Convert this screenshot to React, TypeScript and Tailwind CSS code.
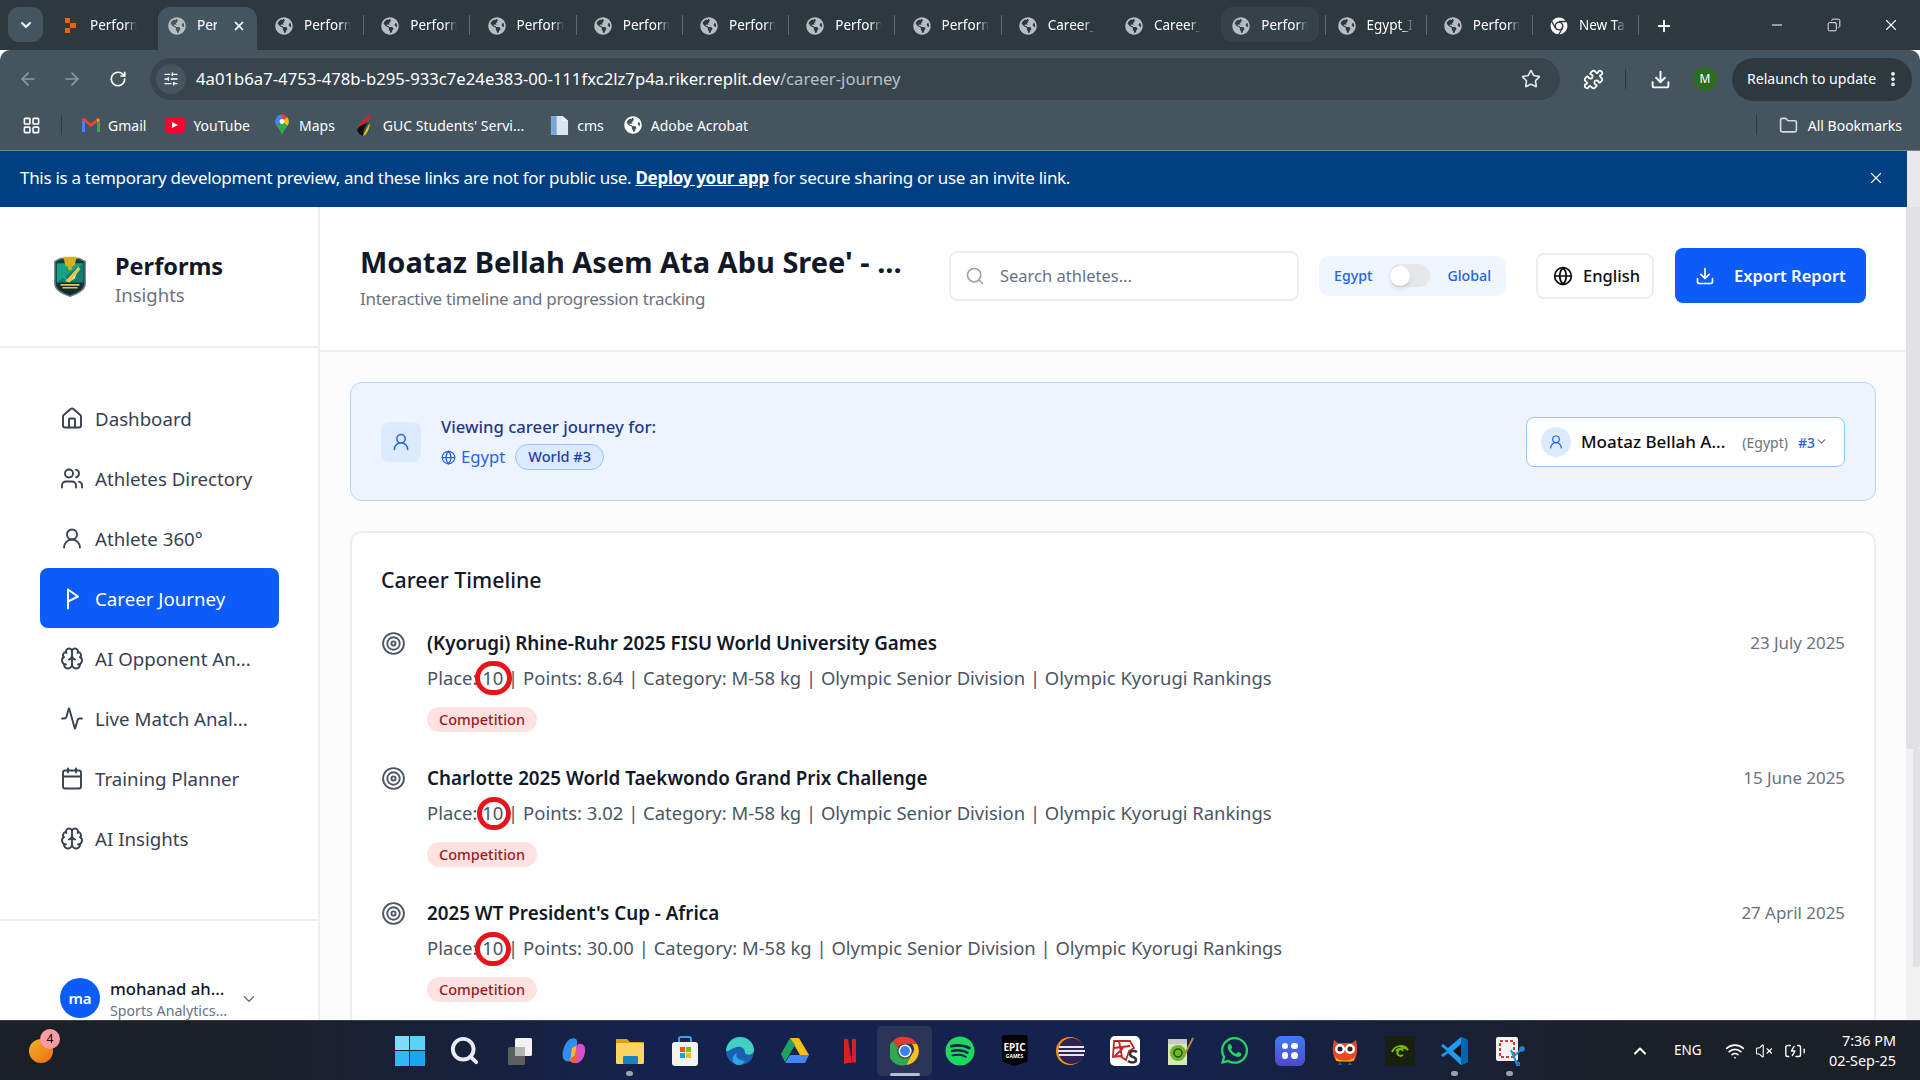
import React from "react";
import {
  Home, Users, UserRound, Brain, Activity, Calendar, Globe, Search, Download, ChevronDown, ChevronUp,
  Target, X, Star, RotateCw, ArrowLeft, ArrowRight, Puzzle, EllipsisVertical, Plus, Minus, Copy, Folder,
  LayoutGrid, VolumeX, Wifi, BatteryCharging, SlidersHorizontal,
} from "lucide-react";
import { FaGlobeAmericas, FaWhatsapp, FaSpotify } from "react-icons/fa";

const FONT = "font-['Noto_Sans','Open_Sans',sans-serif]";

function ReplitIcon() {
  return (
    <svg viewBox="0 0 18 18" className="w-[18px] h-[18px] shrink-0">
      <path d="M4 1h5v5H4zM9 6h6v5H9zM4 11h5v5H4z" fill="#f26207" />
    </svg>
  );
}

function ChromeIcon({ size = 20 }: { size?: number }) {
  return (
    <svg viewBox="0 0 32 32" width={size} height={size} className="shrink-0">
      <circle cx="16" cy="16" r="15" fill="#fff" />
      <path d="M16 8h14M10 20 3 8M22 20l-7 12" stroke="#2d383f" strokeWidth="2.500" />
      <circle cx="16" cy="16" r="8" fill="#2d383f" />
      <circle cx="16" cy="16" r="5.500" fill="#fff" />
    </svg>
  );
}

const R = "w-[106.25px]";
const tabs = [
  { label: "Perform", w: "w-[106px]", sep: false, kind: "replit" },
  { label: "Per", w: "w-[99px]", sep: false, kind: "active" },
  { label: "Perform", w: R, sep: true, kind: "globe" },
  { label: "Perform", w: R, sep: true, kind: "globe" },
  { label: "Perform", w: R, sep: true, kind: "globe" },
  { label: "Perform", w: R, sep: true, kind: "globe" },
  { label: "Perform", w: R, sep: true, kind: "globe" },
  { label: "Perform", w: R, sep: true, kind: "globe" },
  { label: "Perform", w: R, sep: true, kind: "globe" },
  { label: "Career_", w: R, sep: false, kind: "globe" },
  { label: "Career_", w: R, sep: false, kind: "globe" },
  { label: "Perform", w: R, sep: true, kind: "hover" },
  { label: "Egypt_I", w: R, sep: true, kind: "globe" },
  { label: "Perform", w: R, sep: true, kind: "globe" },
  { label: "New Ta", w: R, sep: true, kind: "chrome" },
];

function TabBar() {
  return (
    <div className="h-[50px] bg-[#2d383f] flex items-start pl-[8px] text-white">
      <div className="w-[35px] h-[35px] mt-[7px] rounded-[11px] bg-[#45555f] flex items-center justify-center mr-[9px] shrink-0">
        <ChevronDown size={16} strokeWidth={3} />
      </div>
      {tabs.map((t, i) => {
        const active = t.kind === "active";
        return (
          <div
            key={i}
            className={`${t.w} ${active ? "h-[43px] mt-[7px] bg-[#45555f] rounded-t-[12px] mr-[9px]" : "h-[35px] mt-[7px]"} flex items-center shrink-0`}
          >
            <div className={`flex items-center h-[35px] pt-[2px] ${t.kind === "hover" ? "bg-[#35424a] rounded-[11px] w-[98px] ml-[-1px] pl-[11px]" : active ? "pl-[10px] w-full mb-[8px]" : "pl-[9px] w-[100px]"}`}>
              {t.kind === "replit" ? <ReplitIcon /> : t.kind === "chrome" ? <ChromeIcon size={18} /> : <FaGlobeAmericas size={18} className="text-[#b6bcc0] shrink-0" />}
              <span className={`ml-[11px] text-[13.5px] overflow-hidden whitespace-nowrap ${active ? "w-[20px]" : "w-[47px] [mask-image:linear-gradient(to_right,black_75%,transparent)]"}`}>
                {t.label}
              </span>
              {active && <X size={14} strokeWidth={3} className="ml-[15px]" />}
            </div>
            {t.sep && <div className={`w-[1px] h-[20px] bg-[#5a6a74] ${t.kind === "hover" ? "ml-[6px]" : "ml-[-3px]"}`} />}
          </div>
        );
      })}
      <Plus size={18} strokeWidth={2.5} className="mt-[17px] ml-[8px] shrink-0" />
      <div className="ml-auto flex items-center h-[40px] mt-[5px] pr-[1px]">
        <div className="w-[57px] flex justify-center"><Minus size={16} strokeWidth={1.5} /></div>
        <div className="w-[57px] flex justify-center"><Copy size={14} strokeWidth={1.5} className="scale-x-[-1]" /></div>
        <div className="w-[57px] flex justify-center"><X size={18} strokeWidth={1.5} /></div>
      </div>
    </div>
  );
}

function Toolbar() {
  return (
    <div className="h-[58px] bg-[#45555f] rounded-t-[10px] flex items-center text-white">
      <div className="w-[50px] flex justify-center pl-[6px]"><ArrowLeft size={20} className="text-[#8f9ba3]" /></div>
      <div className="w-[44px] flex justify-center"><ArrowRight size={20} className="text-[#8f9ba3]" /></div>
      <div className="w-[54px] flex justify-center pr-[6px]"><RotateCw size={18} strokeWidth={2.2} /></div>
      <div className="ml-[2px] w-[1410px] h-[42px] rounded-full bg-[#38454d] flex items-center">
        <div className="ml-[6px] w-[30px] h-[30px] rounded-full bg-[#45555f] flex items-center justify-center">
          <SlidersHorizontal size={16} />
        </div>
        <span className="ml-[10px] text-[16.7px] whitespace-nowrap">
          4a01b6a7-4753-478b-b295-933c7e24e383-00-111fxc2lz7p4a.riker.replit.dev<span className="text-[#b9c1c6]">/career-journey</span>
        </span>
        <Star size={20} className="ml-auto mr-[19px] text-[#dfe3e5]" />
      </div>
      <div className="ml-[21px] w-[24px] flex justify-center"><Puzzle size={21} /></div>
      <div className="ml-[20px] w-[1px] h-[20px] bg-[#2d383f]" />
      <div className="ml-[22px] w-[24px] flex justify-center"><Download size={21} strokeWidth={2.2} /></div>
      <div className="ml-[21px] w-[24px] h-[24px] rounded-full bg-[#2f6b1e] flex items-center justify-center text-[12px]">M</div>
      <div className="ml-[15px] w-[180px] h-[43px] rounded-full bg-[#2d383f] flex items-center pl-[15px]">
        <span className="text-[14.1px] whitespace-nowrap">Relaunch to update</span>
        <EllipsisVertical size={18} strokeWidth={3} className="ml-auto mr-[10px]" />
      </div>
    </div>
  );
}

function GmailIcon() {
  return (
    <svg viewBox="0 0 20 16" className="w-[20px] h-[16px] shrink-0">
      <path d="M1 15V3l3 2v10z" fill="#4285f4" />
      <path d="M19 15V3l-3 2v10z" fill="#34a853" />
      <path d="M1 3c0-2 2-2.500 3-1.500l6 5 6-5c1-1 3-.5 3 1.500l-9 7z" fill="#ea4335" />
      <path d="M16 1.500 19 3l-3 2z" fill="#fbbc04" />
    </svg>
  );
}
function YoutubeIcon() {
  return (
    <div className="w-[20px] h-[16px] rounded-[4px] bg-[#ff0033] flex items-center justify-center shrink-0">
      <div className="w-0 h-0 border-y-[3.5px] border-y-transparent border-l-[6px] border-l-white" />
    </div>
  );
}
function MapsIcon() {
  return (
    <svg viewBox="0 0 16 24" className="w-[14px] h-[22px] shrink-0">
      <path d="M8 0a8 8 0 0 0-6 13l6-6z" fill="#4285f4" />
      <path d="M8 0a8 8 0 0 1 6 3L8 8z" fill="#ea4335" />
      <path d="M14 3a8 8 0 0 1 0 10L8 8z" fill="#fbbc04" />
      <path d="M2 13c2 3 5 6 6 11 1-5 4-8 6-11L8 7z" fill="#34a853" />
      <circle cx="8" cy="8" r="2.800" fill="#fff" />
    </svg>
  );
}
function GucIcon() {
  return (
    <svg viewBox="0 0 20 24" className="w-[20px] h-[24px] shrink-0">
      <path d="M17 1C10 4 4 10 2 17c3-4 7-7 12-10z" fill="#d4202a" />
      <path d="M2 17c1 3 3 5 6 6 0-5 2-10 5-13-5 1-9 3-11 7z" fill="#111" />
      <path d="M8 23c3-1 6-5 7-13-2 3-5 8-7 13z" fill="#f4c20d" />
    </svg>
  );
}
function CmsIcon() {
  return (
    <svg viewBox="0 0 20 22" className="w-[19px] h-[21px] shrink-0">
      <path d="M1 1h12l6 5v15H1z" fill="#dbe6f2" />
      <path d="M1 1h6v20H1z" fill="#7aa5d6" />
      <path d="M13 1v5h6z" fill="#fff" />
    </svg>
  );
}

function BookmarkBar() {
  return (
    <div className="h-[42px] bg-[#45555f] border-b border-b-[#7c8489] box-content flex items-center pb-0 text-white text-[14px]">
      <div className="w-[61px] flex items-center pl-[22px] mb-[8px]"><LayoutGrid size={19} strokeWidth={2} /></div>
      <div className="flex items-center mb-[8px] flex-1">
        <div className="w-[1px] h-[20px] bg-[#2d383f]" />
        <div className="flex items-center ml-[19px]"><GmailIcon /><span className="ml-[7px]">Gmail</span></div>
        <div className="flex items-center ml-[19px]"><YoutubeIcon /><span className="ml-[8px]">YouTube</span></div>
        <div className="flex items-center ml-[25px]"><MapsIcon /><span className="ml-[10px]">Maps</span></div>
        <div className="flex items-center ml-[20px]"><GucIcon /><span className="ml-[8px] whitespace-nowrap">GUC Students' Servi...</span></div>
        <div className="flex items-center ml-[26px]"><CmsIcon /><span className="ml-[8px]">cms</span></div>
        <div className="flex items-center ml-[20px]"><FaGlobeAmericas size={18} className="text-white" /><span className="ml-[9px]">Adobe Acrobat</span></div>
        <div className="ml-auto flex items-center pr-[18px]">
          <div className="w-[1px] h-[20px] bg-[#2d383f] mr-[22px]" />
          <Folder size={19} className="text-[#d6dadc]" />
          <span className="ml-[10px]">All Bookmarks</span>
        </div>
      </div>
    </div>
  );
}

function Banner() {
  return (
    <div className="h-[56px] flex shrink-0">
      <div className="w-[1907px] bg-[#004082] flex items-center pl-[20px] pb-[2px] text-white text-[17px] tracking-[-0.3px]">
        <span className="whitespace-nowrap">
          This is a temporary development preview, and these links are not for public use.{" "}
          <span className="font-bold underline">Deploy your app</span> for secure sharing or use an invite link.
        </span>
        <X size={18} strokeWidth={1.5} className="ml-auto mr-[22px]" />
      </div>
      <div className="flex-1 bg-[#e8e8ea]" />
    </div>
  );
}

function LogoShield() {
  return (
    <svg viewBox="0 0 36 44" className="w-[34px] h-[43px] shrink-0">
      <path d="M2 6 8 3h20l6 3v24c0 7-10 11-16 13C12 41 2 37 2 30z" fill="#123a3f" stroke="#6f7d80" strokeWidth="1.500" />
      <path d="M4 8h28v20H4z" fill="#19a184" />
      <path d="M4 28 32 8v20z" fill="#0f7f73" />
      <path d="M11 1h14l-2 9-3 2v3h-4v-3l-3-2z" fill="#d9ad22" />
      <path d="M9 19l6 7L28 11l-5 13-7 4z" fill="#eef3f3" />
      <path d="M13 27 27 12l2 2-11 14z" fill="#e8c845" />
      <path d="M6 29h24v6l-12 6-12-6z" fill="#0d2b31" />
      <path d="M8 30h20v1.800H8zM10 33h16v1.800H10z" fill="#e8c845" />
    </svg>
  );
}

function FlagIcon() {
  return (
    <svg viewBox="0 0 24 24" className="w-[25px] h-[25px]" fill="none" stroke="currentColor" strokeWidth="2" strokeLinecap="round" strokeLinejoin="round">
      <path d="M8 22V3l10 7-10 5" />
    </svg>
  );
}

const navItems = [
  { label: "Dashboard", icon: <Home size={25} strokeWidth={1.9} /> },
  { label: "Athletes Directory", icon: <Users size={25} strokeWidth={1.9} /> },
  { label: "Athlete 360°", icon: <UserRound size={25} strokeWidth={1.9} /> },
  { label: "Career Journey", icon: <FlagIcon />, active: true },
  { label: "AI Opponent An...", icon: <Brain size={25} strokeWidth={1.9} /> },
  { label: "Live Match Anal...", icon: <Activity size={25} strokeWidth={1.9} /> },
  { label: "Training Planner", icon: <Calendar size={25} strokeWidth={1.9} /> },
  { label: "AI Insights", icon: <Brain size={25} strokeWidth={1.9} /> },
];

function Sidebar() {
  return (
    <aside className="w-[320px] shrink-0 border-r-2 border-r-[#eeeeef] bg-white flex flex-col overflow-hidden">
      <div className="h-[141px] shrink-0 border-b-2 border-b-[#eeeeef] flex items-center pl-[53px]">
        <LogoShield />
        <div className="ml-[28px] mt-[4px]">
          <div className="text-[23.5px] font-bold text-[#111827] leading-[32px]">Performs</div>
          <div className="text-[18.5px] text-[#6b7280] leading-[26px]">Insights</div>
        </div>
      </div>
      <nav className="pt-[40px] px-[40px] w-[319px] h-[571px] shrink-0 box-border">
        {navItems.map((n) => (
          <div
            key={n.label}
            className={`h-[60px] flex items-center rounded-[8px] pl-[20px] ${n.active ? "bg-[#0b5cf9] text-white" : "text-[#374151]"}`}
          >
            <span className="w-[24px] flex justify-center pt-[1px]">{n.icon}</span>
            <span className="ml-[11px] pt-[3px] text-[18.7px] whitespace-nowrap">{n.label}</span>
          </div>
        ))}
      </nav>
      <div className="border-t-2 border-t-[#eeeeef] pt-[57px] pl-[60px] flex items-start">
        <div className="w-[40px] h-[40px] rounded-full bg-[#0b5cf9] flex items-center justify-center text-white text-[15px] font-semibold">ma</div>
        <div className="ml-[10px] w-[130px]">
          <div className="text-[16.7px] font-medium text-[#111827] leading-[22px]">mohanad ah...</div>
          <div className="text-[14.2px] text-[#6b7280] leading-[22px]">Sports Analytics...</div>
        </div>
        <ChevronDown size={18} className="text-[#6b7280] mt-[12px]" />
      </div>
    </aside>
  );
}

function Header() {
  return (
    <header className="h-[145px] shrink-0 bg-white border-b-2 border-b-[#eeeeef] flex items-center pl-[40px] pb-[6px]">
      <div className="w-[589px] shrink-0 mt-[2px]">
        <h1 className="text-[29px] font-bold text-[#111827] leading-[38px] whitespace-nowrap">Moataz Bellah Asem Ata Abu Sree' - ...</h1>
        <p className="text-[17px] tracking-[-0.3px] text-[#6b7280] leading-[24px] mt-[6px]">Interactive timeline and progression tracking</p>
      </div>
      <div className="w-[350px] h-[50px] shrink-0 rounded-[8px] border-2 border-[#eceded] flex items-center pl-[14px]">
        <Search size={20} className="text-[#9ca3af]" />
        <span className="ml-[15px] pt-[2px] text-[16.5px] text-[#6b7280]">Search athletes...</span>
      </div>
      <div className="ml-[20px] w-[187px] h-[40px] shrink-0 rounded-[10px] bg-[#eff6ff] flex items-center pl-[15px] text-[14.2px] font-medium text-[#2563eb]">
        <span>Egypt</span>
        <div className="ml-[17px] w-[41px] h-[23px] rounded-full bg-[#e5e7eb] flex items-center pl-[1px]">
          <div className="w-[20px] h-[20px] rounded-full bg-white shadow-md" />
        </div>
        <span className="ml-[17px]">Global</span>
      </div>
      <div className="ml-[30px] w-[118px] h-[46px] shrink-0 rounded-[8px] border-2 border-[#eceded] flex items-center pl-[15px] text-[#0b0b0b]">
        <Globe size={20} />
        <span className="ml-[10px] pt-[2px] text-[16.5px] font-medium">English</span>
      </div>
      <div className="ml-[21px] w-[191px] h-[55px] shrink-0 rounded-[8px] bg-[#0b5cf9] flex items-center pl-[20px] text-white">
        <Download size={20} />
        <span className="ml-[19px] pt-[2px] text-[16.5px] font-semibold whitespace-nowrap">Export Report</span>
      </div>
    </header>
  );
}

function AthleteCard() {
  return (
    <section className="h-[119px] rounded-[12px] border border-[#b5d5fd] bg-[#eef4fe] flex items-center pl-[30px] pr-[30px]">
      <div className="w-[40px] h-[40px] rounded-[8px] bg-[#dbeafe] flex items-center justify-center text-[#2563eb]">
        <UserRound size={20} strokeWidth={1.8} />
      </div>
      <div className="ml-[20px] mt-[2px]">
        <div className="text-[16.7px] font-medium text-[#1e3a8a] leading-[24px]">Viewing career journey for:</div>
        <div className="flex items-center mt-[5px]">
          <Globe size={15} className="text-[#2563eb]" />
          <span className="ml-[5px] text-[16.7px] text-[#2563eb]">Egypt</span>
          <span className="ml-[10px] h-[26px] px-[12px] rounded-full border border-[#93c5fd] bg-[#dbeafe] text-[#1e40af] text-[14.5px] font-medium flex items-center">World #3</span>
        </div>
      </div>
      <div className="ml-auto w-[319px] h-[50px] rounded-[8px] border border-[#93c5fd] bg-white flex items-center pl-[14px]">
        <div className="w-[30px] h-[30px] rounded-full bg-[#dbeafe] flex items-center justify-center text-[#2563eb]">
          <UserRound size={16} strokeWidth={1.8} />
        </div>
        <span className="ml-[10px] pt-[1px] text-[17px] font-medium text-[#0b0b0b] whitespace-nowrap">Moataz Bellah A...</span>
        <span className="ml-[17px] pt-[1px] text-[14px] text-[#6b7280]">(Egypt)</span>
        <span className="ml-[10px] pt-[1px] text-[14px] font-medium text-[#2563eb]">#3</span>
        <ChevronDown size={13} className="text-[#6b7280]" />
      </div>
    </section>
  );
}

const events = [
  {
    title: "(Kyorugi) Rhine-Ruhr 2025 FISU World University Games",
    points: "8.64",
    date: "23 July 2025",
    circle: "left-[94px] top-[31px] w-[37px] h-[34px]",
  },
  {
    title: "Charlotte 2025 World Taekwondo Grand Prix Challenge",
    points: "3.02",
    date: "15 June 2025",
    circle: "left-[96px] top-[32px] w-[34px] h-[33px]",
  },
  {
    title: "2025 WT President's Cup - Africa",
    points: "30.00",
    date: "27 April 2025",
    circle: "left-[94px] top-[32px] w-[36px] h-[34px]",
  },
];

function Timeline() {
  return (
    <section className="mt-[30px] rounded-t-[12px] border-2 border-[#eeeeef] bg-white px-[29px] pt-[27px] h-[520px]">
      <h2 className="text-[21.3px] font-medium text-[#111827] leading-[40px] mb-[30px]">Career Timeline</h2>
      <div className="flex flex-col gap-[33px]">
        {events.map((e) => (
          <div key={e.title} className="relative flex items-start h-[102px]">
            <Target size={25} strokeWidth={1.8} className="text-[#4b5563] shrink-0 mt-[1px]" />
            <div className="ml-[21px] flex-1">
              <div className="flex justify-between items-start">
                <div className="text-[18.8px] font-semibold text-[#111827] leading-[26px]">{e.title}</div>
                <div className="text-[16.9px] text-[#6b7280] leading-[26px]">{e.date}</div>
              </div>
              <div className="text-[18.45px] text-[#4b5563] leading-[27px] mt-[8px] whitespace-nowrap">
                Place: 10 | Points: {e.points} | Category: M-58 kg | Olympic Senior Division | Olympic Kyorugi Rankings
              </div>
              <div className="mt-[16px] inline-flex items-center h-[25px] px-[12px] rounded-full bg-[#fee2e2] text-[#991b1b] text-[14.5px] font-medium">Competition</div>
            </div>
            <div className={`absolute ${e.circle} rounded-full border-[5px] border-[#e8141c]`} />
          </div>
        ))}
      </div>
    </section>
  );
}

function Scrollbar() {
  return (
    <div className="w-[14px] shrink-0 bg-[#f1f1f2] flex flex-col">
      <div className="h-[542px] bg-[#e2e2e4] rounded-b-[4px]" />
      <div className="h-[218px] w-[7px] self-end bg-[#e2e2e4] rounded-b-[4px]" />
    </div>
  );
}

function Win() {
  return (
    <div className="grid grid-cols-2 gap-[1px] w-[30px] h-[30px]">
      <div className="bg-[#7fdcfb]" /><div className="bg-[#5cd0fa]" /><div className="bg-[#31b9f6]" /><div className="bg-[#1aa5ef]" />
    </div>
  );
}
const s = "w-[30px] h-[30px]";
function TaskView() {
  return (
    <svg viewBox="0 0 30 30" className={s}>
      <rect x="10" y="2" width="17" height="18" rx="1.500" fill="#f2f2f2" />
      <rect x="3" y="11" width="17" height="18" rx="1.500" fill="#5e5e5e" />
      <rect x="10" y="11" width="10" height="9" fill="#b5b5b5" />
    </svg>
  );
}
function Copilot() {
  return (
    <svg viewBox="0 0 30 30" className={s}>
      <path d="M10 3c5-2 8 0 7 5l-4 15c-1 3-8 4-10-1S5 6 10 3z" fill="#2f8fe8" />
      <path d="M18 8c5-1 8 2 7 8-1 7-5 12-11 11-3-1-2-6-1-8z" fill="#d84fc6" />
      <path d="M12 12 17 9l-3 13-4 4z" fill="#f6b63c" />
      <path d="M14 27c-3 0-4-2-3-5l7-5c0 4-1 8-4 10z" fill="#f4603c" />
    </svg>
  );
}
function Files() {
  return (
    <svg viewBox="0 0 30 30" className={s}>
      <path d="M1 3h11l3 3h14v4H1z" fill="#e0a00f" />
      <rect x="1" y="7" width="28" height="21" rx="1.500" fill="#fbd561" />
      <rect x="8" y="20" width="15" height="8" rx="1" fill="#1583c8" />
    </svg>
  );
}
function Store() {
  return (
    <svg viewBox="0 0 30 30" className={s}>
      <path d="M9 6V3a2 2 0 0 1 2-2h8a2 2 0 0 1 2 2v3" fill="none" stroke="#2ea7e0" strokeWidth="2" />
      <rect x="2" y="6" width="26" height="24" rx="3" fill="#f3f3f3" />
      <rect x="10" y="11" width="5" height="5" fill="#f25022" /><rect x="16" y="11" width="5" height="5" fill="#7fba00" />
      <rect x="10" y="17" width="5" height="5" fill="#00a4ef" /><rect x="16" y="17" width="5" height="5" fill="#ffb900" />
    </svg>
  );
}
function Edge() {
  return (
    <svg viewBox="0 0 30 30" className={s}>
      <circle cx="15" cy="15" r="14" fill="#1b5fb0" />
      <path d="M1 15C2 5 9 1 15 1c8 0 14 6 14 13 0 5-7 6-9 3 0-4-3-7-8-6-6 1-8 5-11 4z" fill="#41d0c0" />
      <path d="M13 29C6 28 6 19 12 17c-2 4 1 7 8 8-2 3-4 4-7 4z" fill="#2aa6e6" />
    </svg>
  );
}
function Drive() {
  return (
    <svg viewBox="0 0 30 28" className={s}>
      <path d="M10 1h9l10 17h-9z" fill="#f6bd1f" />
      <path d="M10 1 1 17l4 8 10-17z" fill="#1ea362" />
      <path d="M5 26h20l4-8H10z" fill="#4285f4" />
    </svg>
  );
}
function Netflix() {
  return (
    <svg viewBox="0 0 30 30" className={s}>
      <path d="M9 3h4l4 24h-4zM9 3h4v24l-4 1zM17 3h4v24l-4-1z" fill="#d81f26" />
    </svg>
  );
}
function ChromeColor() {
  return (
    <svg viewBox="0 0 30 30" className={s}>
      <path d="M15 1a14 14 0 0 1 12 7H15a7 7 0 0 0-7 4L3 5a14 14 0 0 1 12-4z" fill="#e33b2e" />
      <path d="M27 8a14 14 0 0 1-11 21l6-11a7 7 0 0 0 0-10z" fill="#fbc116" />
      <path d="M3 5a14 14 0 0 0 13 24l6-11a7 7 0 0 1-14-6z" fill="#2fa84f" />
      <circle cx="15" cy="15" r="6.500" fill="#fff" /><circle cx="15" cy="15" r="5" fill="#3b82f0" />
    </svg>
  );
}
function Epic() {
  return (
    <div className="w-[26px] h-[31px] bg-black rounded-[2px] flex flex-col items-center justify-center text-white leading-none [clip-path:polygon(0_0,100%_0,100%_85%,50%_100%,0_85%)]">
      <span className="text-[10px] font-bold leading-[10px]">EPIC</span>
      <span className="text-[5px] font-bold leading-[8px]">GAMES</span>
    </div>
  );
}
function Eclipse() {
  return (
    <svg viewBox="0 0 30 30" className={s}>
      <circle cx="15" cy="15" r="14" fill="#f7941e" />
      <circle cx="16.500" cy="15" r="13" fill="#2c2255" />
      <path d="M4 10h25v2H4zM3 14h27v2H3zM4 18h25v2H4z" fill="#e8e6f0" />
    </svg>
  );
}
function Sublime() {
  return (
    <div className="w-[30px] h-[30px] rounded-[5px] bg-white overflow-hidden">
      <svg viewBox="0 0 30 30" className="w-[30px] h-[30px]">
        <path d="M4 5h16l4 7-5 3-3 9-6-4-7 1zM4 12l16-2M9 5l3 16M4 21l9-9" fill="none" stroke="#c0272d" strokeWidth="1.800" />
        <path d="M27 16c-3-2-7-1-7 2 0 4 6 2 6 6 0 3-5 3-8 1" fill="none" stroke="#333" strokeWidth="2.500" />
      </svg>
    </div>
  );
}
function Notepad() {
  return (
    <svg viewBox="0 0 30 30" className={s}>
      <path d="M3 3h19v26H3z" fill="#d7eab5" />
      <path d="M3 3h19v5H3z" fill="#c8c8c8" />
      <circle cx="13" cy="17" r="8" fill="#71b62a" />
      <circle cx="13" cy="17" r="4" fill="none" stroke="#1d4d0f" strokeWidth="1.500" />
      <path d="M28 2 20 18" stroke="#b68b2a" strokeWidth="2" />
    </svg>
  );
}
function Teams() {
  return (
    <div className="w-[30px] h-[30px] rounded-[6px] bg-gradient-to-b from-[#3f7cf2] to-[#4d49c8] grid grid-cols-2 gap-x-[3px] gap-y-[3px] p-[7px]">
      <div className="bg-white rounded-full" /><div className="bg-white rounded-full" /><div className="bg-white rounded-full" /><div className="bg-white rounded-full" />
    </div>
  );
}
function Owl() {
  return (
    <svg viewBox="0 0 30 30" className={s}>
      <path d="M4 4l4 3h14l4-3c2 8 2 20-5 22H9C2 24 2 12 4 4z" fill="#e8481f" />
      <path d="M5 20c3 6 17 6 20 0l-1 5H6z" fill="#f7a11b" />
      <circle cx="10" cy="13" r="5" fill="#fff" /><circle cx="20" cy="13" r="5" fill="#fff" />
      <circle cx="10" cy="13" r="2.500" fill="#222" /><circle cx="20" cy="13" r="2.500" fill="#222" />
      <path d="M10 26l-2 3h4zM20 26l-2 3h4z" fill="#555" />
    </svg>
  );
}
function Nvidia() {
  return (
    <div className="w-[30px] h-[30px] bg-[#1a1f14] flex items-center justify-center">
      <svg viewBox="0 0 20 20" className="w-[20px] h-[20px]" fill="none" stroke="#76b900" strokeWidth="2">
        <path d="M2 11c3-7 12-8 16-2-3-3-8-3-10 1s2 6 5 4" />
        <path d="M6 10c2-3 6-3 7 0" />
      </svg>
    </div>
  );
}
function VSCode() {
  return (
    <svg viewBox="0 0 30 30" className={s}>
      <path d="M21 1 28 4v22l-7 3L8 17l-5 4-2-2 6-4-6-5 2-2 5 4z" fill="#1f9cf0" />
      <path d="M21 8 13 15l8 7z" fill="#10151c" />
      <path d="M21 1 28 4v22l-7 3z" fill="#0065a9" />
    </svg>
  );
}
function Snip() {
  return (
    <svg viewBox="0 0 30 30" className={s}>
      <rect x="1" y="1" width="22" height="24" rx="2" fill="#f3f3f3" />
      <rect x="5" y="5" width="14" height="16" fill="none" stroke="#e3342f" strokeWidth="2" strokeDasharray="3 2" />
      <path d="M28 12 18 21M16 14l6 14" stroke="#2090d8" strokeWidth="2" />
      <circle cx="27" cy="13" r="2" fill="none" stroke="#2090d8" strokeWidth="1.500" />
      <circle cx="23" cy="28" r="1.500" fill="none" stroke="#2090d8" strokeWidth="1.500" />
    </svg>
  );
}

const dock = [
  { c: <Win /> },
  { c: <Search size={31} strokeWidth={3} className="text-[#e8ecf4]" /> },
  { c: <TaskView /> },
  { c: <Copilot /> },
  { c: <Files />, dot: true },
  { c: <Store /> },
  { c: <Edge /> },
  { c: <Drive /> },
  { c: <Netflix /> },
  { c: <ChromeColor />, active: true },
  { c: <FaSpotify size={30} className="text-[#1ed760]" /> },
  { c: <Epic /> },
  { c: <Eclipse /> },
  { c: <Sublime /> },
  { c: <Notepad /> },
  { c: <FaWhatsapp size={31} className="text-[#25d366]" /> },
  { c: <Teams /> },
  { c: <Owl /> },
  { c: <Nvidia /> },
  { c: <VSCode />, dot: true },
  { c: <Snip />, dot: true },
];

function Taskbar() {
  return (
    <div className="h-[60px] shrink-0 border-t border-t-[#3a3f4a] bg-[linear-gradient(90deg,#1b2027_0%,#1b2027_12%,#14224e_35%,#14224e_60%,#1b2027_85%,#1b2027_100%)] flex items-center text-white">
      <div className="relative w-[382px] h-full shrink-0">
        <div className="absolute left-[29px] top-[18px] w-[24px] h-[24px] rounded-full bg-gradient-to-br from-[#eab32a] to-[#ef6a0c]" />
        <div className="absolute left-[40px] top-[8px] w-[20px] h-[20px] rounded-full bg-[#ff9aa2] text-black text-[12px] flex items-center justify-center">4</div>
      </div>
      <div className="flex items-center">
        {dock.map((d, i) => (
          <div key={i} className={`relative w-[55px] h-[50px] flex items-center justify-center rounded-[5px] ${d.active ? "bg-[#2a3557]" : ""}`}>
            {d.c}
            {d.dot && <div className="absolute bottom-[0px] w-[7px] h-[5px] rounded-full bg-[#9aa0aa]" />}
            {d.active && <div className="absolute bottom-[0px] w-[30px] h-[3px] rounded-full bg-[#b8c0d0]" />}
          </div>
        ))}
      </div>
      <div className="flex items-center ml-[93px] flex-1">
        <ChevronUp size={20} strokeWidth={2.5} />
        <span className="ml-[24px] text-[13.5px]">ENG</span>
        <Wifi size={20} className="ml-[23px]" />
        <VolumeX size={18} strokeWidth={1.5} className="ml-[10px]" />
        <BatteryCharging size={22} strokeWidth={1.5} className="ml-[11px]" />
        <div className="ml-auto mr-[24px] text-right text-[14.4px] leading-[20px]">
          <div>7:36 PM</div>
          <div>02-Sep-25</div>
        </div>
      </div>
    </div>
  );
}

export default function App() {
  return (
    <div className={`w-[1920px] h-[1080px] flex flex-col overflow-hidden bg-white ${FONT}`}>
      <TabBar />
      <Toolbar />
      <BookmarkBar />
      <Banner />
      <div className="flex-1 flex min-h-0">
        <Sidebar />
        <main className="flex-1 flex flex-col min-w-0 overflow-hidden bg-[#fcfcfc]">
          <Header />
          <div className="px-[30px] pt-[30px]">
            <AthleteCard />
            <Timeline />
          </div>
        </main>
        <Scrollbar />
      </div>
      <Taskbar />
    </div>
  );
}
